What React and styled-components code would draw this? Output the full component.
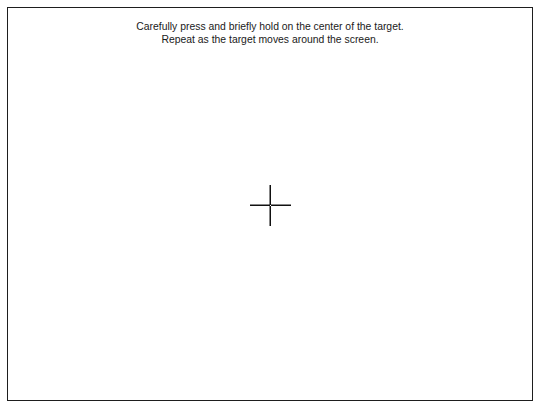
import React from "react";
import styled, { createGlobalStyle } from "styled-components";

const Global = createGlobalStyle`
  html, body {
    margin: 0;
    padding: 0;
    background: #ffffff;
  }
`;

const Screen = styled.div`
  width: 547px;
  height: 409px;
  box-sizing: border-box;
  padding: 7px 14px 8px 7px;
`;

const Frame = styled.div`
  width: 100%;
  height: 100%;
  box-sizing: border-box;
  border: 1px solid #1e1e1e;
  display: grid;
  grid-template: 1fr / 1fr;
`;

const Instructions = styled.div`
  grid-area: 1 / 1;
  align-self: start;
  justify-self: center;
  padding-top: 12px;
  font-family: "Liberation Sans", Arial, sans-serif;
  font-size: 10.4px;
  line-height: 13px;
  color: #1a1a1a;
  text-align: center;
`;

const TargetSlot = styled.div`
  grid-area: 1 / 1;
  align-self: center;
  justify-self: center;
  display: flex;
  padding: 3px 0 0 1px;
`;

const Crosshair = () => (
  <svg width="41" height="41" viewBox="0 0 41 41">
    <rect x="0" y="19.5" width="20" height="1.5" fill="#111" />
    <rect x="21" y="19.5" width="20" height="1.5" fill="#111" />
    <rect x="19.5" y="0" width="1.5" height="20" fill="#111" />
    <rect x="19.5" y="21" width="1.5" height="20" fill="#111" />
  </svg>
);

export default function App() {
  return (
    <Screen>
      <Global />
      <Frame>
        <Instructions>
          Carefully press and briefly hold on the center of the target.
          <br />
          Repeat as the target moves around the screen.
        </Instructions>
        <TargetSlot>
          <Crosshair />
        </TargetSlot>
      </Frame>
    </Screen>
  );
}
